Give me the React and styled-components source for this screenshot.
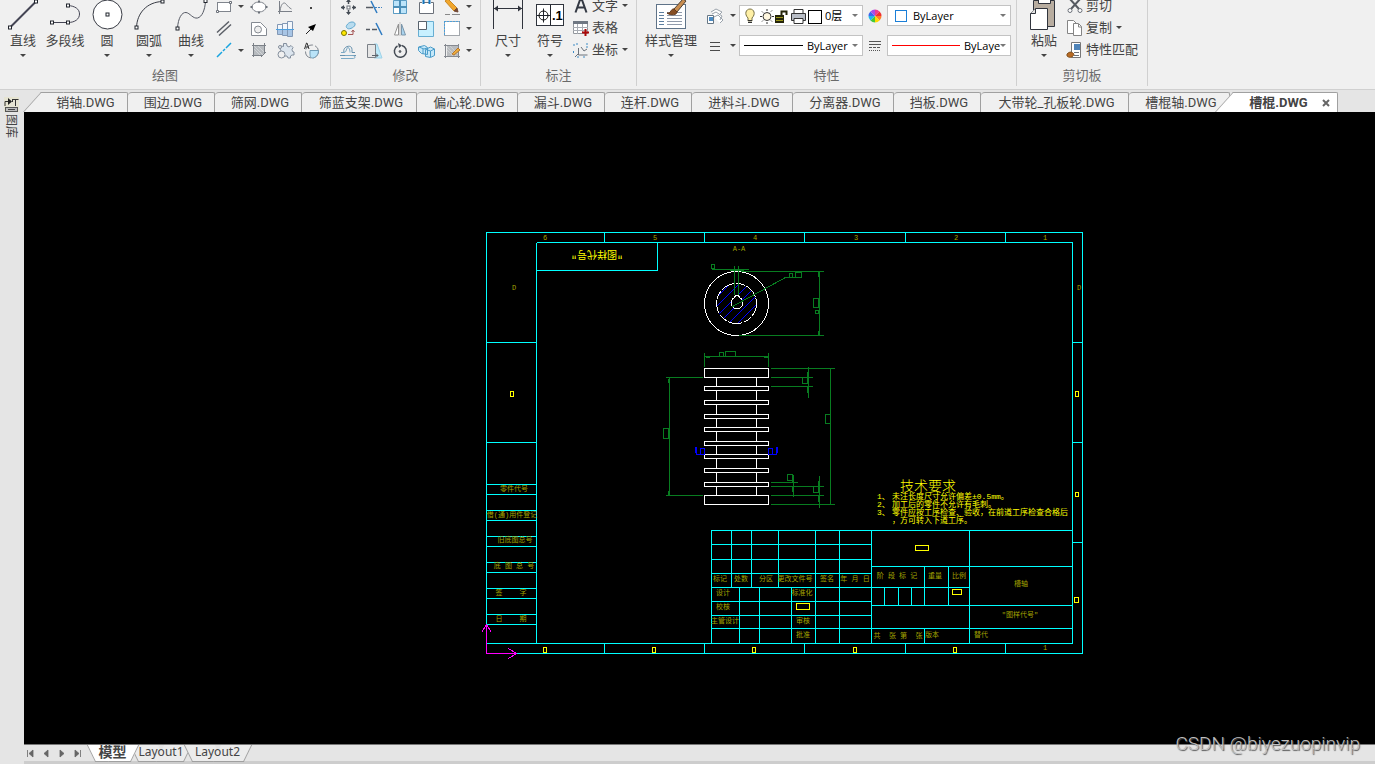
import { useState } from 'react';
import styled, { createGlobalStyle, css } from 'styled-components';

const Theme = {
  ribbon: '#f0f0f0',
  panel: '#e5e5e5',
  border: '#d0d0d0',
  tabBorder: '#a0a0a0',
  text: '#444444',
  textSoft: '#6a6a6a',
  cyan: '#00ffff',
  green: '#087c20',
  yellow: '#ffff00',
  olive: '#a3a300',
  blue: '#0000ff',
  magenta: '#ff00ff',
};

const GlobalStyle = createGlobalStyle`
  * {
    box-sizing: border-box;
  }

  body {
    margin: 0;
    overflow: hidden;
    background: ${Theme.panel};
    color: ${Theme.text};
    font-family: 'Noto Sans CJK SC', 'Noto Sans', sans-serif;
    font-size: 13px;
  }

  button, select {
    font: inherit;
    color: inherit;
    border: none;
    background: none;
    padding: 0;
    margin: 0;
  }
`;

const Page = styled.div`
  position: relative;
  display: flex;
  flex-direction: column;
  height: 100vh;
`;

/* ---------- ribbon ---------- */

const Ribbon = styled.header`
  display: flex;
  flex: none;
  height: 90px;
  background: ${Theme.ribbon};
  border-bottom: 1px solid ${Theme.border};
`;

const Group = styled.section`
  display: flex;
  flex-direction: column;
  width: ${({ $width }) => $width}px;
  height: 86px;
  border-right: 1px solid ${Theme.border};
`;

const GroupBody = styled.div`
  display: flex;
  height: 70px;
  margin-top: -5px;
  padding-left: ${({ $pad }) => $pad}px;
`;

const GroupTitle = styled.div`
  text-align: center;
  line-height: 20px;
  color: ${Theme.textSoft};
`;

const BigButton = styled.button`
  display: flex;
  flex-direction: column;
  align-items: center;
  width: ${({ $width }) => $width || 42}px;
  white-space: nowrap;
`;

const BigLabel = styled.span`
  line-height: 18px;
  height: 23px;
`;

const Caret = styled.span`
  display: block;
  flex: none;
  width: 6px;
  border: 3px solid transparent;
  border-top-color: ${({ $soft }) => ($soft ? '#777777' : Theme.text)};
  border-bottom: none;
`;

const ToolGrid = styled.div`
  display: grid;
  grid-template-columns: ${({ $columns }) => $columns};
  grid-template-rows: repeat(3, 22px);
`;

const ToolButton = styled.button`
  display: flex;
  align-items: center;
  justify-content: center;
`;

const TextRows = styled.div`
  display: grid;
  grid-template-rows: repeat(3, 22px);
`;

const TextButton = styled.button`
  display: flex;
  align-items: center;
  padding-bottom: 2px;
  line-height: 20px;
  white-space: nowrap;

  svg {
    margin-right: 1px;
  }

  ${Caret} {
    margin-left: 4px;
  }
`;

const PropertyGrid = styled.div`
  display: grid;
  grid-template-columns: 31px 9px 124px 24px 124px;
  grid-template-rows: 21px 21px;
  row-gap: 9px;
  padding-top: 10px;
  align-items: center;
`;

const Field = styled.label`
  display: flex;
  align-items: center;
  height: 21px;
  padding: 0 4px;
  overflow: hidden;
  background: white;
  border: 1px solid #c3c3c3;
`;

const Select = styled.select`
  appearance: none;
  flex: 1;
  min-width: 0;
  outline: none;
  color: black;
  font-family: 'Open Sans', 'Noto Sans CJK SC', sans-serif;
  font-size: 11px;
  line-height: 18px;
`;

const Swatch = styled.span`
  flex: none;
  width: 12px;
  height: 12px;
  margin: 0 6px 0 3px;
  border: 1px solid #1b7fd8;
`;

const LinePreview = styled.span`
  flex: none;
  width: ${({ $width }) => $width}px;
  margin-right: 4px;
  border-top: 1px solid ${({ $ink }) => $ink};
`;

/* ---------- workspace ---------- */

const Workspace = styled.div`
  display: flex;
  flex: 1;
  min-height: 0;
`;

const Sidebar = styled.aside`
  flex: none;
  width: 24px;
  padding: 7px 0 0 4px;
`;

const LibraryButton = styled.button`
  display: flex;
  flex-direction: column;
  align-items: center;
  width: 15px;
  font-size: 12px;
  line-height: 14px;
`;

const VerticalLabel = styled.span`
  writing-mode: vertical-rl;
  text-orientation: sideways;
  margin-top: 2px;
`;

const Main = styled.main`
  display: flex;
  flex: 1;
  flex-direction: column;
  min-width: 0;
`;

const FileTabs = styled.nav`
  display: flex;
  align-items: flex-end;
  flex: none;
  height: 22px;
  padding-left: 18px;
`;

const FileTab = styled.button`
  position: relative;
  display: flex;
  align-items: center;
  justify-content: center;
  flex: 0 1 ${({ $width }) => $width}px;
  height: 20px;
  padding-left: 4px;
  line-height: 18px;
  white-space: nowrap;
  background: ${Theme.ribbon};
  border-top: 1px solid ${Theme.tabBorder};
  border-right: 1px solid ${Theme.tabBorder};
  border-radius: 4px 2px 0 0;

  ${({ $slanted }) => $slanted && css`
    padding-left: 2px;
    border-top-left-radius: 0;

    &::before {
      content: '';
      position: absolute;
      left: -10px;
      top: -1px;
      bottom: 0;
      width: 22px;
      background: inherit;
      border-left: 1px solid ${Theme.tabBorder};
      border-top: 1px solid ${Theme.tabBorder};
      transform: skewX(-42deg);
    }
  `}

  ${({ $active }) => $active && css`
    z-index: 1;
    margin-left: 4px;
    padding-left: 8px;
    background: white;
    font-weight: bold;
  `}
`;

const TabText = styled.span`
  position: relative;
  font-family: 'Roboto', 'Noto Sans CJK SC', sans-serif;
`;

const CloseMark = styled.svg`
  margin-left: 14px;
`;

const Canvas = styled.div`
  position: relative;
  z-index: 2;
  flex: 1;
  min-height: 0;
  background: black;

  svg {
    display: block;
    width: 100%;
    height: 100%;
  }
`;

const StatusBar = styled.footer`
  display: flex;
  flex: none;
  height: 20px;
  border-top: 1px solid #777777;
  border-bottom: 3px solid #cdcdcd;
`;

const Pager = styled.div`
  display: flex;
  align-items: center;
  width: 67px;
`;

const PagerButton = styled.button`
  display: flex;
  width: 16px;
`;

const LayoutTab = styled.button`
  position: relative;
  display: flex;
  justify-content: center;
  width: ${({ $width }) => $width}px;
  height: 16px;
  line-height: 14px;
  font-family: 'Noto Sans', 'Noto Sans CJK SC', sans-serif;
  font-size: ${({ $active }) => ($active ? 14 : 12)}px;
  font-weight: ${({ $active }) => ($active ? 'bold' : 'normal')};
  z-index: ${({ $active }) => ($active ? 1 : 0)};

  &::before,
  &::after {
    content: '';
    position: absolute;
    top: 0;
    width: 50%;
    height: 16px;
    background: ${({ $active }) => ($active ? 'white' : '#ececec')};
    border-bottom: 1px solid ${Theme.tabBorder};
  }

  &::before {
    left: 0;
    border-left: 1px solid ${Theme.tabBorder};
    transform: skewX(26deg);
  }

  &::after {
    right: 0;
    border-right: 1px solid ${Theme.tabBorder};
    transform: skewX(-26deg);
  }

  span {
    position: relative;
    z-index: 1;
  }
`;

const Watermark = styled.div`
  position: absolute;
  z-index: 3;
  right: 15px;
  bottom: 8px;
  font-family: 'Roboto', sans-serif;
  font-size: 19px;
  font-weight: 300;
  line-height: 24px;
  color: #c0c0c0;
  text-shadow: 1px 1px 1px #555555;
`;

/* ---------- icons ---------- */

const Icon = ({ size = 20, height, children }) => (
  <svg
    width={size}
    height={height || size}
    viewBox={`0 0 ${size} ${height || size}`}
    fill="none"
    stroke="#6b7079"
    aria-hidden="true"
  >
    {children}
  </svg>
);

const Node = ({ x, y }) => (
  <rect x={x - 1.5} y={y - 1.5} width="3" height="3" fill="white" stroke="#20242c" />
);

const LineIcon = () => (
  <Icon size={36}>
    <path d="M5 32.5 31 6.5" stroke="#444554" strokeWidth="2" />
    <Node x={5} y={32.5} /><Node x={31} y={6.5} />
  </Icon>
);

const PolylineIcon = () => (
  <Icon size={36}>
    <path d="M5 27.5H21C28 27.5 32.5 24 32.5 19S28 11 21 10.5" stroke="#444554" />
    <Node x={5} y={27.5} /><Node x={21} y={27.5} /><Node x={21} y={10.5} />
  </Icon>
);

const CircleIcon = () => (
  <Icon size={36}>
    <circle cx="18.5" cy="19.5" r="14.5" fill="white" stroke="#383b44" />
    <Node x={18.5} y={19.5} />
  </Icon>
);

const ArcIcon = () => (
  <Icon size={36}>
    <path d="M5.5 32.5C6 18 16 7 31.5 6.5" stroke="#383b44" />
    <Node x={5.5} y={32.5} /><Node x={31.5} y={6.5} />
  </Icon>
);

const CurveIcon = () => (
  <Icon size={36}>
    <path d="M4.5 33.5C5 23 9 17 13 17.500S20 24 24.500 23 32 15 32.500 6" stroke="#555964" />
    <Node x={4.5} y={33.5} /><Node x={32.5} y={6} />
  </Icon>
);

const DimensionIcon = () => (
  <Icon size={36}>
    <path d="M3.500 5V34M32.500 5V34M4 13.500H32" stroke="#30343d" />
    <path d="m4 13.500 4-3v6zM32 13.500l-4-3v6z" fill="#30343d" stroke="none" />
  </Icon>
);

const SymbolIcon = () => (
  <Icon size={36}>
    <rect x="4.500" y="9.500" width="27" height="21" fill="white" stroke="#30343d" />
    <path d="M18.500 10V30M5 20.500H18M11.500 13.500V27.500" stroke="#20242c" />
    <circle cx="11.500" cy="20.500" r="4.500" stroke="#111111" />
    <text x="20" y="25" fontFamily="Liberation Sans" fontSize="13" fontWeight="bold" fill="black" stroke="none">.1</text>
  </Icon>
);

const StyleIcon = () => (
  <Icon size={36}>
    <rect x="3.500" y="9.500" width="29" height="24" fill="white" stroke="#5f7388" />
    <path d="M6 17.500h5M6 20.500h5M6 23.500h5M6 26.500h5M6 29.500h5" stroke="#5d7fa0" />
    <path d="M14 17.500h15M14 20.500h15M14 23.500h15M14 26.500h15M14 29.500h15" stroke="#909aaa" />
    <path d="M21 14 30 4l3 2-9 11z" fill="#c98d4f" stroke="#4d4034" />
    <path d="M14 18c4 1 4-5 7-4l3 3c0 3-6 4-10 1z" fill="#864d22" stroke="#5f371a" />
  </Icon>
);

const PasteIcon = () => (
  <Icon size={36}>
    <path d="M7.500 5.500H28.500V31.500H7.500z" fill="#b8ada0" stroke="#30343d" />
    <path d="M12.500 4v4.500h12V4" fill="white" stroke="#30343d" />
    <path d="M9.500 13.500H21.500V34.500H4.500V18.500z" fill="white" stroke="#30343d" />
    <path d="M9.500 13.500v5h-5" fill="#e4e4e4" stroke="#30343d" />
  </Icon>
);

const RectIcon = () => (
  <Icon>
    <rect x="3.500" y="6.500" width="13" height="9" fill="white" stroke="#80858d" />
    <path d="M2.500 14.500h2v2h-2zM15.500 5.500h2v2h-2z" fill="white" />
  </Icon>
);

const EllipseIcon = () => (
  <Icon>
    <ellipse cx="10" cy="11" rx="7" ry="5" fill="white" stroke="#80858d" />
    <path d="M9 5.500h2M9 16.500h2M2.500 10v2M17.500 10v2" strokeWidth="2" />
  </Icon>
);

const PlotCurveIcon = () => (
  <Icon>
    <path d="M4.500 5v13M3 15.500h14M5 15C6 8 8 7 9.500 7s3 4 7 6" stroke="#7b8088" />
  </Icon>
);

const PointIcon = () => (
  <Icon><rect x="9" y="11" width="2" height="2" fill="#444" stroke="none" /></Icon>
);

const ParallelIcon = () => (
  <Icon><path d="M3 14.500 15 3.500M5 17.500 17 6.500" stroke="#5c6068" strokeWidth="1.500" /></Icon>
);

const ContourIcon = () => (
  <Icon>
    <path d="M2.500 4.500h9l6 6v7h-15z" fill="white" stroke="#858a92" />
    <circle cx="9" cy="11.500" r="3.500" fill="#eeeeee" stroke="#858a92" />
  </Icon>
);

const ShaftIcon = () => (
  <Icon>
    <path d="M2.500 6.500h5v10h-5zM7.500 5.500h5v12h-5zM12.500 3.500h5v15h-5z" fill="#a8c5e5" stroke="#8298b5" />
    <path d="M3 7h4v4H3zM8 6h4v5H8zM13 4h4v7h-4z" fill="#f4f8fc" stroke="none" />
    <path d="M1 11.500h18" stroke="#4da0e0" />
  </Icon>
);

const ArrowIcon = () => (
  <Icon>
    <path d="m5 16 6-6" stroke="#222" /><path d="m15 6-3 7-5-4z" fill="black" stroke="none" />
  </Icon>
);

const CenterLineIcon = () => (
  <Icon><path d="m3 17 5-5M9 11l2-2M12 8l5-5" stroke="#18a4e0" strokeWidth="1.500" /></Icon>
);

const HatchIcon = () => (
  <Icon>
    <path d="M5 6h10v9H5z" fill="#b6babe" stroke="none" />
    <path d="m5 9 6 6M5 6l9 9M9 6l6 6" stroke="#cfd2d5" />
    <path d="M4.500 3v14M15.500 3v10M3 5.500h14M3 15.500h10M17 12l-5 5" stroke="#7b8087" />
  </Icon>
);

const GearIcon = () => (
  <Icon>
    <path d="M8.500 3.500h3l.500 2.500 2 1 2-1.500 2 2-1 2 .500 2 1.500.500v3h-2l-1.500 1v2h-2.500l-1-2H9L5 9V7l1.500-1 2 .500z" fill="#dce5ee" stroke="#848f9d" />
    <circle cx="6.500" cy="14.500" r="3.500" fill="#f0f0f0" stroke="#848f9d" />
    <circle cx="5" cy="7" r="1.500" fill="#f0f0f0" stroke="#848f9d" />
  </Icon>
);

const RegionIcon = () => (
  <Icon>
    <circle cx="11" cy="11.500" r="6.500" strokeDasharray="9 2" stroke="#80868e" />
    <path d="M9 10.500h8.500c0 4-3 7.500-6 7.500S9 14 9 10.500z" fill="#b9e3f8" stroke="#709bb5" />
    <path d="m3.500 9 2-6h.500l2 6M4.500 7h3" stroke="#333" />
  </Icon>
);

const MoveIcon = () => (
  <Icon>
    <path d="M10.500 4v4M10.500 14v4M3 11.500h4M14 11.500h4" stroke="#444b54" strokeWidth="1.500" />
    <path d="m10.500 3-2.500 3h5zM10.500 19 8 16h5zM3 11.500 6 9v5zM18 11.500 15 9v5z" fill="#444b54" stroke="none" />
    <rect x="9" y="10" width="3" height="3" fill="white" />
  </Icon>
);

const TrimIcon = () => (
  <Icon>
    <path d="M2 11.500h7" stroke="#555b63" strokeWidth="1.500" />
    <path d="m7 5 6 12" stroke="#2f7bc2" strokeWidth="1.500" />
    <path d="M11 11.500h7" stroke="#3f83c2" strokeDasharray="2 1" />
  </Icon>
);

const ArrayIcon = () => (
  <Icon>
    <path d="M3.500 4.500h13v13h-13z" fill="#bce4fa" stroke="#5c9dc4" />
    <path d="M3.500 11.500h6v6h-6z" fill="white" stroke="#5c9dc4" />
    <path d="M10 4v14M3 11h14" stroke="#4c8fb8" strokeWidth="2" />
  </Icon>
);

const BreakIcon = () => (
  <Icon>
    <path d="M6 6.500H3.500v11h14v-11H15M8 6.500h5" fill="white" />
    <path d="M7.500 4v4M13.500 4v4" stroke="#1576bd" strokeWidth="2" />
  </Icon>
);

const PencilIcon = () => (
  <Icon>
    <path d="m3 5 3-2 9 9-3 3z" fill="#f1a62c" stroke="#c98722" />
    <path d="m12 15 4 1-1-4z" fill="#784a32" stroke="#704733" />
    <path d="M3 18.500h5M10 18.500h8" stroke="#888" />
  </Icon>
);

const CopyShapeIcon = () => (
  <Icon>
    <path d="M9 7c2-4 9-4 8 0-1 3-7 5-8 3-1-1-1-2 0-3z" fill="#b8dcef" stroke="#62a9cf" />
    <circle cx="6" cy="15" r="2.500" fill="#ffe900" stroke="#7d7600" />
    <path d="M10 16.500h5v-4m-1.500 1.500 1.500-2 1.500 2" stroke="#a55555" />
  </Icon>
);

const ExtendIcon = () => (
  <Icon>
    <path d="M2 11.500h4M8 11.500h5" stroke="#555b63" strokeWidth="1.500" />
    <path d="m12 5 6 12" stroke="#2f7bc2" strokeWidth="1.500" />
  </Icon>
);

const MirrorIcon = () => (
  <Icon>
    <path d="M8.500 6v11h-4z" fill="white" stroke="#929292" />
    <path d="M11.500 6v11h4z" fill="#a9d3ee" stroke="#7b96aa" />
    <path d="M10 4v14" stroke="#c0c0c0" />
  </Icon>
);

const ScaleIcon = () => (
  <Icon>
    <path d="M2.500 3.500h15v15h-15z" fill="#c8f0ff" stroke="#68aed2" />
    <path d="M2.500 3.500h8v8h-8z" fill="white" stroke="#59626c" />
  </Icon>
);

const SelectionIcon = () => (
  <Icon>
    <rect x="2.500" y="3.500" width="15" height="14" fill="white" stroke="#a3a7ac" />
    <path d="M2 3.500h16M2.500 3v15" stroke="#4d9fd8" strokeDasharray="2 1" />
  </Icon>
);

const OffsetIcon = () => (
  <Icon>
    <path d="M2 15.500h5M13 15.500h5M6 12.500c-2-6 8-9 8-3v3h3" stroke="#6791ad" />
    <path d="M3 12.500h3c3 0 2-5 4-5s2 5 2 5M7 15.500h6c2 0 4 0 4 1.500s-1 1.500-3 1.500H3" stroke="#7caac6" />
  </Icon>
);

const StretchIcon = () => (
  <Icon>
    <path d="M10 4h3l5 14h-8z" fill="#bceafa" stroke="#9fd2e8" />
    <path d="M3.500 4.500h8v13h-8z" fill="#e6e6e6" stroke="#7b8087" />
    <path d="M8 15.500h6m-2-2 2 2-2 2" stroke="#5c646c" />
  </Icon>
);

const RotateIcon = () => (
  <Icon>
    <path d="M12 5.500a6 6 0 1 1-4.500.500" stroke="#444b54" strokeWidth="1.500" />
    <path d="m8 3 4 2.500L9 8z" fill="#444b54" stroke="none" />
    <circle cx="10" cy="11.500" r="1" fill="#444" />
  </Icon>
);

const SolidIcon = () => (
  <Icon>
    <path d="m2.500 7 6-1.500 3 2v7l-6-1-3-3zM9.500 9.500l5-2.500 4 2v6.500l-4 2-5-1z" fill="#c5e8f9" stroke="#4b9cc9" />
    <path d="m3 7 5 2 3-1M10 9.500l4.500 1.500 4-2M14.500 11v6M7 9v5" stroke="#4b9cc9" />
  </Icon>
);

const HatchEditIcon = () => (
  <Icon>
    <path d="M5 6h11v10H5z" fill="#b9bcbf" stroke="none" />
    <path d="m5 10 6 6M5 7l9 9M8 6l8 8" stroke="#cdd0d3" />
    <path d="M2 5.500h15M3.500 4v14M2 16.500h16M16.500 4v14" stroke="#858990" />
    <path d="m10 14 6-6 2 2-6 5z" fill="#edad3e" stroke="#b8782c" />
  </Icon>
);

const LetterIcon = () => (
  <Icon><path d="m4.500 17.500 5-14h1l5 14M6 12.500h8" stroke="#333943" strokeWidth="2" /></Icon>
);

const TableIcon = () => (
  <Icon>
    <path d="M2.500 4.500h14v12h-14z" fill="white" stroke="#92969c" />
    <path d="M2 4h15v3H2z" fill="#6f7782" stroke="none" />
    <path d="M2 10.500h15M2 13.500h15M6.500 7v10M11.500 7v10" stroke="#a9adb4" />
    <path d="M14.500 12v7M11 15.500h7" stroke="#aa0909" strokeWidth="2" />
  </Icon>
);

const CoordinateIcon = () => (
  <Icon>
    <path d="M7.500 9v7h9M4 18l3-3M10 8l3 4 3-2" stroke="#6c737b" />
    <path d="M3 5v3M6 4v3M2.500 12v3M6 18h3M12 18h3M16 4v5" stroke="#3d8bc5" strokeDasharray="2 1" />
  </Icon>
);

const LayersIcon = () => (
  <Icon>
    <path d="m6 6 5-3 6 3-3 3M7 8l4-2 6 4-2 4M9 11l4-2 5 5-3 3" fill="white" stroke="#9ba3ac" />
    <path d="M2.500 9.500h6v8h-6z" fill="white" stroke="#677785" /><path d="M4 11h4v4H4z" fill="#4d8cc4" stroke="none" />
  </Icon>
);

const MenuIcon = () => (
  <Icon><path d="M5 6.500h10M5 10.500h10M5 14.500h10" stroke="#4b4b4b" /></Icon>
);

const LineTypeIcon = () => (
  <Icon>
    <path d="M4 5.500h12M4 8.500h12" stroke="#555" />
    <path d="M4 11.500h12" stroke="#555" strokeDasharray="3 1" />
    <path d="M4 14.500h12" stroke="#555" strokeDasharray="1 1" />
  </Icon>
);

const wheelColors = ['#ff7f27', '#ffd900', '#43c83c', '#20b8e8', '#3c66ef', '#a64ce8', '#ef3b8d', '#f03030'];

const WheelIcon = () => (
  <Icon>
    {wheelColors.map((color, i) => (
      <path key={color} d="M10 10 16.500 10A6.500 6.500 0 0 1 14.600 14.600z" fill={color} stroke="none" transform={`rotate(${i * 45} 10 10)`} />
    ))}
  </Icon>
);

const LayerStateIcon = () => (
  <Icon size={81} height={18}>
    <path d="M4 11C0 7 2 2 6 2s6 5 2 9v3H4z" fill="#fff0a6" stroke="#777044" />
    <path d="M4 13.500h4M4 15.500h4" stroke="#333" />
    <circle cx="23" cy="9.500" r="4" fill="#fff7df" stroke="#333" />
    <path d="M23 2v2M23 15v2M16 9.500h2M28 9.500h2M18 4.500l1 1M27 4.500l1-1M18 14.500l1-1M27 13.500l1 1" stroke="#333" />
    <path d="M31 8h9v8h-9z" fill="#24240a" stroke="none" /><path d="M32 10.500h7M32 13.500h7" stroke="#99951a" />
    <path d="M37.500 9V4.500h5V8" stroke="#24240a" strokeWidth="2" />
    <path d="M50 6V2.500h9V6" fill="white" stroke="#333" /><path d="M47.500 6.500h14v7h-14z" fill="#b8bdc6" stroke="#333" />
    <path d="M50 11.500h9v5h-9z" fill="white" stroke="#333" />
    <rect x="64.500" y="3.500" width="13" height="13" fill="white" stroke="black" />
  </Icon>
);

const CutIcon = () => (
  <Icon>
    <path d="m4 3 10 11M16 3 6 14" stroke="#555a61" strokeWidth="2" />
    <circle cx="5" cy="15.500" r="2" fill="white" /><circle cx="15" cy="15.500" r="2" fill="white" />
  </Icon>
);

const CopyIcon = () => (
  <Icon>
    <path d="M2.500 3.500h6l3 3v10h-9z" fill="white" stroke="#858585" />
    <path d="M8.500 6.500h5l3 3v9h-8z" fill="white" stroke="#858585" />
    <path d="M13.500 7v3h3" stroke="#858585" />
  </Icon>
);

const MatchIcon = () => (
  <Icon>
    <path d="M6.500 3.500h9v15h-9z" fill="white" stroke="#777" />
    <path d="M9 5h6v6H9z" fill="#4e83b8" stroke="none" /><path d="M9 13.500h5M9 16.500h5" />
    <path d="M2 15c3-3 5-2 7 0-1 4-5 4-7 2z" fill="#b86a23" stroke="#81501f" />
  </Icon>
);

const LibraryIcon = () => (
  <Icon size={15}>
    <path d="M0 0h15v15H0z" fill="#e6e4d2" stroke="none" />
    <path d="M1 9V4.500h5M8.500 2.500h6M8.500 2v3M11.500 3v6" stroke="#333" />
    <path d="m4 1 4 3.500L4 8z" fill="#222" stroke="none" />
    <rect x="1.500" y="10.500" width="12" height="4" fill="#bcbcbc" stroke="#555" /><path d="M4 12.500h7" stroke="#444" />
  </Icon>
);

/* ---------- data ---------- */

const drawTools = [
  { label: '直线', icon: LineIcon, menu: true },
  { label: '多段线', icon: PolylineIcon },
  { label: '圆', icon: CircleIcon, menu: true },
  { label: '圆弧', icon: ArcIcon, menu: true },
  { label: '曲线', icon: CurveIcon, menu: true },
];

const drawGrid = [
  RectIcon, Caret, EllipseIcon, PlotCurveIcon, PointIcon,
  ParallelIcon, null, ContourIcon, ShaftIcon, ArrowIcon,
  CenterLineIcon, Caret, HatchIcon, GearIcon, RegionIcon,
];

const modifyGrid = [
  MoveIcon, TrimIcon, ArrayIcon, BreakIcon, PencilIcon, Caret,
  CopyShapeIcon, ExtendIcon, MirrorIcon, ScaleIcon, SelectionIcon, Caret,
  OffsetIcon, StretchIcon, RotateIcon, SolidIcon, HatchEditIcon, Caret,
];

const files = [
  { name: '销轴', width: 86 },
  { name: '围边', width: 87 },
  { name: '筛网', width: 87 },
  { name: '筛蓝支架', width: 115 },
  { name: '偏心轮', width: 101 },
  { name: '漏斗', width: 87 },
  { name: '连杆', width: 87 },
  { name: '进料斗', width: 101 },
  { name: '分离器', width: 101 },
  { name: '挡板', width: 87 },
  { name: '大带轮_孔板轮', width: 148 },
  { name: '槽棍轴', width: 101 },
  { name: '槽棍', width: 104 },
];

const layouts = [
  { name: '模型', width: 43 },
  { name: 'Layout1', width: 54 },
  { name: 'Layout2', width: 59 },
];

const pagerIcons = ['M3.500 1v7M9 1v7L5 4.500z', 'M8 1v7L4 4.500z', 'M4 1v7l4-3.500z', 'M8.500 1v7M3 1v7l4-3.500z'];

const discs = [386, 400, 414, 427, 441, 454, 468, 482];
const hatches = [1013, 1022, 1032, 1041, 1051, 1060, 1070];

const sheetLines = [
  'M486 232H1082V653H486zM536 242H1072V643M536 242V643M486 643H1072M657 242V270H536',
  'M604 232V242M704 232V242M804 232V242M905 232V242M1005 232V242',
  'M604 643V653M704 643V653M804 643V653M905 643V653M1005 643V653',
  'M486 342H536M486 442H536M1072 342H1082M1072 442H1082M1072 542H1082',
  'M486 484H536M486 494H536M486 510H536M486 520H536M486 536H536M486 546H536',
  'M486 562H536M486 572H536M486 588H536M486 598H536M486 614H536M486 624H536',
  'M711 643V530H1072M711 544H871M711 559H871M711 573H871M711 587H871M711 601H871M711 615H871M711 628H871',
  'M731 530V587M751 530V587M778 530V587M815 530V643M839 530V643M871 530V643',
  'M739 587V643M759 587V643M791 587V643',
  'M871 566H1072M871 587H969M871 605H1072M871 628H1072M969 530V643',
  'M924 566V605M948 566V605M884 587V605M898 587V605M911 587V605M924 628V643',
].join('');

const dimensionLines = [
  'M711 269H748M729 270H743M734 265V294M738 265V294M711 264h3v4h-3z',
  'M740 271H823M738 335H823M819 271V335M818 271V276M818 330V335M813 298h5v9h-5zM815 310h3v3h-3z',
  'M732 306 785 277H801M789 273h3v4h-3zM795 272h6v5h-6z',
  'M704 352V366M768 352V366M704 356H768M705 357H709M763 357H768M719 352h4v4h-4zM725 351h10v5h-10z',
  'M770 368H834M770 377H812M770 386H812M808 366V397M807 371V377M807 386V392M802 377h5v6h-5z',
  'M830 368V504M825 414h5v9h-5zM770 504H834',
  'M770 482H797M770 486H823M770 495H823M793 474V496M792 474V482M792 486V491M787 474h5v6h-5z',
  'M819 475V507M818 480V486M818 495V501M813 486h5v6h-5z',
  'M665 377H702M665 495H702M669 377V495M668 378V382M668 490V494M663 428h5v10h-5z',
].join('');

const emptyBoxes = [
  [915, 545, 13, 5], [952, 589, 9, 5], [796, 603, 13, 6],
  [510, 391, 3, 5], [1075, 391, 3, 5], [1075, 492, 3, 4], [1074, 597, 4, 5],
  [543, 647, 3, 5], [652, 647, 3, 5], [752, 647, 3, 5], [853, 647, 3, 5], [953, 647, 3, 5],
];

const sheetLabels = [
  ['6', 545, 240], ['5', 655, 240], ['4', 755, 240], ['3', 856, 240], ['2', 956, 240], ['1', 1045, 240],
  ['D', 514, 290], ['D', 1079, 290], ['A-A', 739, 251], ['1', 1045, 650],
  ['零件代号', 514, 491], ['借(通)用件登记', 512, 517], ['旧底图总号', 515, 542],
  ['底 图 总 号', 514, 568], ['签    字', 511, 595], ['日    期', 511, 621],
  ['标记', 720, 581], ['处数', 741, 581], ['分区', 766, 581], ['更改文件号', 795, 581],
  ['签名', 827, 581], ['年 月 日', 855, 581], ['设计', 723, 595], ['校核', 723, 609],
  ['主管设计', 725, 623], ['标准化', 802, 595], ['审核', 803, 623], ['批准', 803, 637],
  ['阶 段 标 记', 897, 578], ['重量', 935, 578], ['比例', 959, 578], ['槽轴', 1021, 586],
  ['"图样代号"', 1020, 617], ['共  张 第  张', 898, 638], ['版本', 932, 637], ['替代', 981, 637],
];

const requirements = [
  ['1、', '未注长度尺寸允许偏差±0.5mm。'],
  ['2、', '加工后的零件不允许有毛刺。'],
  ['3、', '零件应按工序检查、验收，在前道工序检查合格后'],
  ['', '，方可转入下道工序。'],
];

/* ---------- drawing ---------- */

const Label = styled.text`
  fill: ${Theme.olive};
  font-family: 'Liberation Mono', 'Noto Sans CJK SC', monospace;
  font-size: 7px;
  text-anchor: middle;
  white-space: pre;
`;

const Note = styled.text`
  fill: ${Theme.yellow};
  font-family: 'Liberation Mono', 'Noto Sans CJK SC', monospace;
  font-size: ${({ $size }) => $size || 8}px;
  font-weight: ${({ $light }) => ($light ? 300 : 400)};
`;

const Drawing = () => (
  <svg viewBox="24 112 1351 632" fill="none" role="img" aria-label="槽棍.DWG">
    <defs>
      <clipPath id="section"><circle cx="736" cy="303" r="20" /></clipPath>
    </defs>
    <g transform="translate(.5 .5)" shapeRendering="crispEdges">
      <path d={sheetLines} stroke={Theme.cyan} />
      <circle cx="736" cy="303" r="32" stroke="white" />
      <g clipPath="url(#section)" stroke={Theme.blue}>
        {hatches.map((sum) => <path key={sum} d={`M${sum - 325} 325 ${sum - 281} 281`} />)}
      </g>
      <circle cx="736" cy="303" r="20" stroke="white" strokeDasharray="14 1 9 2" />
      <path d="M734 297a6 6 0 1 0 5 0l-1-2h-3z" fill="black" stroke="white" />
      <path d={dimensionLines} stroke={Theme.green} />
      <path d="M716 377V495M756 377V495M704 368h64v9h-64zM704 495h64v9h-64z" stroke="white" />
      {discs.map((y) => (
        <rect key={y} x="704" y={y} width="64" height="4" fill="black" stroke="white" />
      ))}
      <path d="M695 446V452M696 446V454H704V448H700V454M777 446V452M776 446V454H768V448H772V454" stroke={Theme.blue} />
      {emptyBoxes.map(([x, y, w, h]) => (
        <rect key={`${x}-${y}`} x={x} y={y} width={w} height={h} stroke={Theme.yellow} />
      ))}
      <path d="M486 653V624M481 632 486 624 491 632M486 653H516M508 648 516 653 508 658" stroke={Theme.magenta} />
    </g>
    {sheetLabels.map(([text, x, y]) => <Label key={`${text}-${x}-${y}`} x={x} y={y}>{text}</Label>)}
    <Note $size={10} textAnchor="middle" x="597" y="255" transform="rotate(180 597 253)">"图样代号"</Note>
    <Note $size={14} $light x="900" y="491">技术要求</Note>
    {requirements.map(([number, text], i) => (
      <g key={text}>
        <Note x="877" y={499 + i * 8}>{number}</Note>
        <Note x="892" y={499 + i * 8}>{text}</Note>
      </g>
    ))}
  </svg>
);

const Tools = ({ items, columns }) => (
  <ToolGrid $columns={columns}>
    {items.map((Item, i) => (Item ? <ToolButton key={i}><Item /></ToolButton> : <span key={i} />))}
  </ToolGrid>
);

const Big = ({ label, icon: IconPart, menu, width }) => (
  <BigButton $width={width}>
    <IconPart />
    <BigLabel>{label}</BigLabel>
    {menu && <Caret />}
  </BigButton>
);

const App = () => {
  const [activeFile, setActiveFile] = useState('槽棍');
  const [activeLayout, setActiveLayout] = useState('模型');

  return (
    <Page>
      <GlobalStyle />
      <Ribbon>
        <Group $width={331}>
          <GroupBody $pad={2}>
            {drawTools.map((tool) => <Big key={tool.label} {...tool} />)}
            <Tools items={drawGrid} columns="24px 10px 26px 26px 26px" />
          </GroupBody>
          <GroupTitle>绘图</GroupTitle>
        </Group>
        <Group $width={150}>
          <GroupBody $pad={4}>
            <Tools items={modifyGrid} columns="repeat(5, 26px) 8px" />
          </GroupBody>
          <GroupTitle>修改</GroupTitle>
        </Group>
        <Group $width={156}>
          <GroupBody $pad={6}>
            <Big label="尺寸" icon={DimensionIcon} menu />
            <Big label="符号" icon={SymbolIcon} menu />
            <TextRows>
              <TextButton><LetterIcon />文字<Caret /></TextButton>
              <TextButton><TableIcon />表格</TextButton>
              <TextButton><CoordinateIcon />坐标<Caret /></TextButton>
            </TextRows>
          </GroupBody>
          <GroupTitle>标注</GroupTitle>
        </Group>
        <Group $width={380}>
          <GroupBody $pad={6}>
            <Big label="样式管理" icon={StyleIcon} width={56} menu />
            <PropertyGrid>
              <ToolButton aria-label="图层管理"><LayersIcon /></ToolButton>
              <Caret />
              <Field>
                <LayerStateIcon />
                <Select aria-label="图层"><option>0层</option></Select>
                <Caret $soft />
              </Field>
              <ToolButton aria-label="颜色"><WheelIcon /></ToolButton>
              <Field>
                <Swatch />
                <Select aria-label="颜色"><option>ByLayer</option></Select>
                <Caret $soft />
              </Field>
              <ToolButton aria-label="线宽"><MenuIcon /></ToolButton>
              <Caret />
              <Field>
                <LinePreview $width={59} $ink="#000000" />
                <Select aria-label="线宽"><option>ByLayer</option></Select>
                <Caret $soft />
              </Field>
              <ToolButton aria-label="线型"><LineTypeIcon /></ToolButton>
              <Field>
                <LinePreview $width={68} $ink="#ff0000" />
                <Select aria-label="线型"><option>ByLayer</option></Select>
                <Caret $soft />
              </Field>
            </PropertyGrid>
          </GroupBody>
          <GroupTitle>特性</GroupTitle>
        </Group>
        <Group $width={131}>
          <GroupBody $pad={6}>
            <Big label="粘贴" icon={PasteIcon} menu />
            <TextRows>
              <TextButton><CutIcon />剪切</TextButton>
              <TextButton><CopyIcon />复制<Caret /></TextButton>
              <TextButton><MatchIcon />特性匹配</TextButton>
            </TextRows>
          </GroupBody>
          <GroupTitle>剪切板</GroupTitle>
        </Group>
      </Ribbon>

      <Workspace>
        <Sidebar>
          <LibraryButton><LibraryIcon /><VerticalLabel>图库</VerticalLabel></LibraryButton>
        </Sidebar>
        <Main>
          <FileTabs>
            {files.map(({ name, width }, i) => (
              <FileTab
                key={name}
                $width={width}
                $slanted={i === 0 || name === activeFile}
                $active={name === activeFile}
                onClick={() => setActiveFile(name)}
              >
                <TabText>{name}.DWG</TabText>
                {name === activeFile && (
                  <CloseMark width="8" height="8" viewBox="0 0 8 8" stroke="#666" strokeWidth="2">
                    <path d="m1 1 6 6M7 1 1 7" />
                  </CloseMark>
                )}
              </FileTab>
            ))}
          </FileTabs>
          <Canvas><Drawing /></Canvas>
          <StatusBar>
            <Pager>
              {pagerIcons.map((d) => (
                <PagerButton key={d}>
                  <svg width="12" height="9" viewBox="0 0 12 9" fill="#666" stroke="#666"><path d={d} strokeWidth=".8" /></svg>
                </PagerButton>
              ))}
            </Pager>
            {layouts.map(({ name, width }) => (
              <LayoutTab key={name} $width={width} $active={name === activeLayout} onClick={() => setActiveLayout(name)}>
                <span>{name}</span>
              </LayoutTab>
            ))}
          </StatusBar>
        </Main>
      </Workspace>
      <Watermark>CSDN @biyezuopinvip</Watermark>
    </Page>
  );
};

export default App;
